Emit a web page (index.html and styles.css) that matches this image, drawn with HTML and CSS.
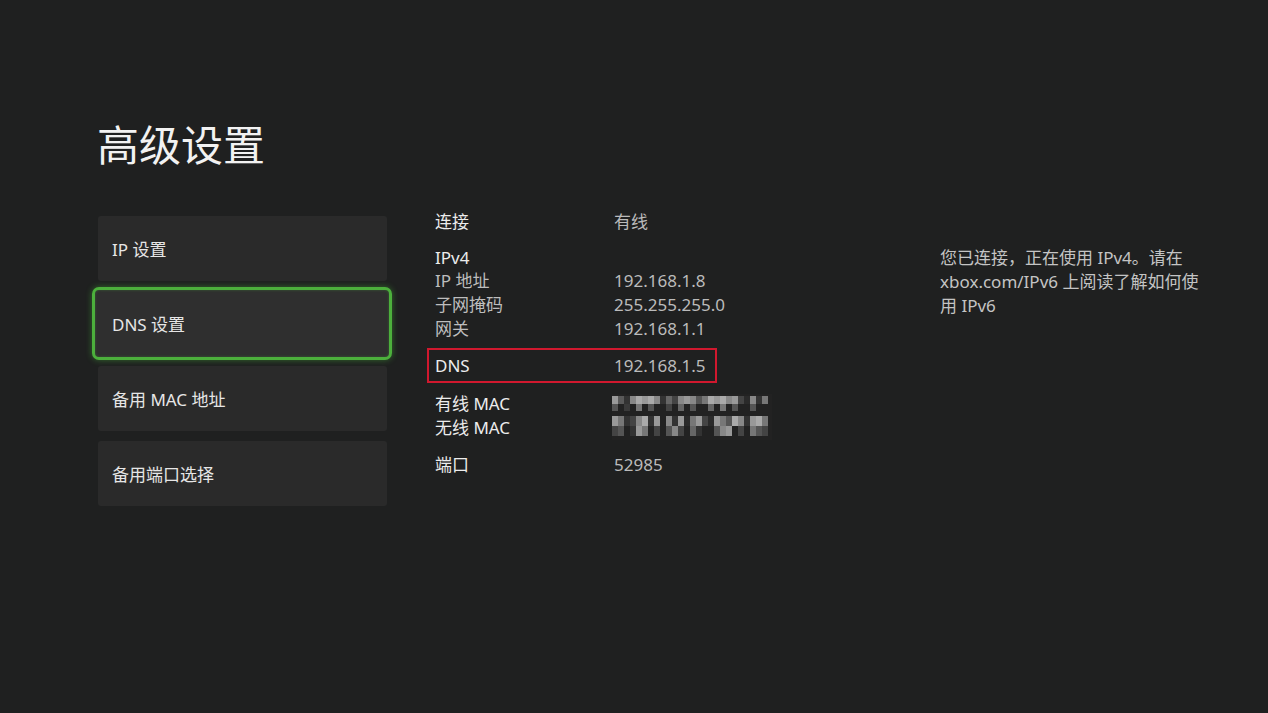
FILE: index.html
```html
<!DOCTYPE html>
<html lang="zh-CN">
<head>
<meta charset="utf-8">
<title>高级设置</title>
<link rel="stylesheet" href="styles.css">
</head>
<body>
<main class="page">
  <h1 class="title">高级设置</h1>
  <div class="content">
    <nav class="menu">
      <div class="card">IP 设置</div>
      <div class="card focused">DNS 设置</div>
      <div class="card">备用 MAC 地址</div>
      <div class="card">备用端口选择</div>
    </nav>
    <section class="details">
      <div class="group">
        <div class="row"><span class="label head">连接</span><span class="value">有线</span></div>
      </div>
      <div class="group">
        <div class="row"><span class="label head">IPv4</span></div>
        <div class="row"><span class="label">IP 地址</span><span class="value">192.168.1.8</span></div>
        <div class="row"><span class="label">子网掩码</span><span class="value">255.255.255.0</span></div>
        <div class="row"><span class="label">网关</span><span class="value">192.168.1.1</span></div>
      </div>
      <div class="group dns">
        <div class="row"><span class="label head">DNS</span><span class="value">192.168.1.5</span></div>
      </div>
      <div class="group mac">
        <div class="macrows">
          <div class="row"><span class="label head">有线 MAC</span></div>
          <div class="row"><span class="label head">无线 MAC</span></div>
        </div>
        <svg class="pixels" width="160" height="46" viewBox="0 0 160 46" aria-hidden="true">
          <g>
            <rect x="0" y="0" width="160" height="46" fill="#222"/>
            <rect x="0" y="2" width="6" height="8" fill="#9a9a9a"/>
            <rect x="6" y="2" width="6" height="8" fill="#5a5a5a"/>
            <rect x="12" y="2" width="6" height="8" fill="#333"/>
            <rect x="18" y="2" width="6" height="8" fill="#888"/>
            <rect x="24" y="2" width="6" height="8" fill="#aaa"/>
            <rect x="30" y="2" width="6" height="8" fill="#999"/>
            <rect x="36" y="2" width="6" height="8" fill="#aaa"/>
            <rect x="42" y="2" width="6" height="8" fill="#888"/>
            <rect x="48" y="2" width="6" height="8" fill="#333"/>
            <rect x="54" y="2" width="6" height="8" fill="#666"/>
            <rect x="60" y="2" width="6" height="8" fill="#444"/>
            <rect x="66" y="2" width="6" height="8" fill="#888"/>
            <rect x="72" y="2" width="6" height="8" fill="#999"/>
            <rect x="78" y="2" width="6" height="8" fill="#888"/>
            <rect x="84" y="2" width="6" height="8" fill="#555"/>
            <rect x="90" y="2" width="6" height="8" fill="#777"/>
            <rect x="96" y="2" width="6" height="8" fill="#aaa"/>
            <rect x="102" y="2" width="6" height="8" fill="#999"/>
            <rect x="108" y="2" width="6" height="8" fill="#aaa"/>
            <rect x="114" y="2" width="6" height="8" fill="#888"/>
            <rect x="120" y="2" width="6" height="8" fill="#999"/>
            <rect x="126" y="2" width="6" height="8" fill="#444"/>
            <rect x="132" y="2" width="6" height="8" fill="#2a2a2a"/>
            <rect x="138" y="2" width="6" height="8" fill="#888"/>
            <rect x="144" y="2" width="6" height="8" fill="#333"/>
            <rect x="150" y="2" width="6" height="8" fill="#777"/>
            <rect x="0" y="10" width="6" height="7" fill="#555"/>
            <rect x="12" y="10" width="6" height="7" fill="#3a3a3a"/>
            <rect x="24" y="10" width="6" height="7" fill="#777"/>
            <rect x="36" y="10" width="6" height="7" fill="#555"/>
            <rect x="54" y="10" width="6" height="7" fill="#444"/>
            <rect x="66" y="10" width="6" height="7" fill="#666"/>
            <rect x="78" y="10" width="6" height="7" fill="#555"/>
            <rect x="96" y="10" width="6" height="7" fill="#666"/>
            <rect x="108" y="10" width="6" height="7" fill="#777"/>
            <rect x="120" y="10" width="6" height="7" fill="#555"/>
            <rect x="138" y="10" width="6" height="7" fill="#555"/>
            <rect x="0" y="22" width="6" height="10" fill="#999"/>
            <rect x="6" y="22" width="6" height="10" fill="#777"/>
            <rect x="12" y="22" width="6" height="10" fill="#333"/>
            <rect x="18" y="22" width="6" height="10" fill="#444"/>
            <rect x="24" y="22" width="6" height="10" fill="#888"/>
            <rect x="30" y="22" width="6" height="10" fill="#aaa"/>
            <rect x="36" y="22" width="6" height="10" fill="#333"/>
            <rect x="42" y="22" width="6" height="10" fill="#999"/>
            <rect x="48" y="22" width="6" height="10" fill="#222"/>
            <rect x="54" y="22" width="6" height="10" fill="#888"/>
            <rect x="60" y="22" width="6" height="10" fill="#333"/>
            <rect x="66" y="22" width="6" height="10" fill="#999"/>
            <rect x="72" y="22" width="6" height="10" fill="#2a2a2a"/>
            <rect x="78" y="22" width="6" height="10" fill="#777"/>
            <rect x="84" y="22" width="6" height="10" fill="#999"/>
            <rect x="90" y="22" width="6" height="10" fill="#444"/>
            <rect x="96" y="22" width="6" height="10" fill="#2a2a2a"/>
            <rect x="102" y="22" width="6" height="10" fill="#999"/>
            <rect x="108" y="22" width="6" height="10" fill="#777"/>
            <rect x="114" y="22" width="6" height="10" fill="#555"/>
            <rect x="120" y="22" width="6" height="10" fill="#aaa"/>
            <rect x="126" y="22" width="6" height="10" fill="#888"/>
            <rect x="132" y="22" width="6" height="10" fill="#333"/>
            <rect x="138" y="22" width="6" height="10" fill="#999"/>
            <rect x="144" y="22" width="6" height="10" fill="#aaa"/>
            <rect x="150" y="22" width="6" height="10" fill="#777"/>
            <rect x="0" y="32" width="6" height="10" fill="#444"/>
            <rect x="6" y="32" width="6" height="10" fill="#555"/>
            <rect x="18" y="32" width="6" height="10" fill="#333"/>
            <rect x="24" y="32" width="6" height="10" fill="#999"/>
            <rect x="30" y="32" width="6" height="10" fill="#777"/>
            <rect x="42" y="32" width="6" height="10" fill="#444"/>
            <rect x="54" y="32" width="6" height="10" fill="#555"/>
            <rect x="60" y="32" width="6" height="10" fill="#888"/>
            <rect x="66" y="32" width="6" height="10" fill="#444"/>
            <rect x="78" y="32" width="6" height="10" fill="#666"/>
            <rect x="84" y="32" width="6" height="10" fill="#333"/>
            <rect x="102" y="32" width="6" height="10" fill="#555"/>
            <rect x="108" y="32" width="6" height="10" fill="#888"/>
            <rect x="114" y="32" width="6" height="10" fill="#999"/>
            <rect x="126" y="32" width="6" height="10" fill="#444"/>
            <rect x="138" y="32" width="6" height="10" fill="#777"/>
            <rect x="144" y="32" width="6" height="10" fill="#555"/>
            <rect x="150" y="32" width="6" height="10" fill="#444"/>
          </g>
        </svg>
      </div>
      <div class="group">
        <div class="row"><span class="label head">端口</span><span class="value">52985</span></div>
      </div>
    </section>
    <aside class="help">您已连接，正在使用 IPv4。请在<br>xbox.com/IPv6 上阅读了解如何使<br>用 IPv6</aside>
  </div>
</main>
</body>
</html>
```

FILE: styles.css
```css
html, body {
  margin: 0;
  padding: 0;
  height: 100%;
}

body {
  background: #1f2020;
  font-family: "Noto Sans", "Noto Sans CJK SC", sans-serif;
  color: #e8e8e8;
  overflow: hidden;
}

.page {
  padding: 118px 0 0 97px;
}

.title {
  margin: 0;
  font-size: 42px;
  line-height: 50px;
  font-weight: 400;
  color: #f2f2f2;
  font-family: "Noto Sans CJK SC", sans-serif;
}

.content {
  display: flex;
  align-items: flex-start;
  margin-top: 42px;
  padding-left: 1px;
}

.menu {
  width: 289px;
  display: flex;
  flex-direction: column;
  gap: 10px;
  margin-top: 6px;
}

.card {
  height: 65px;
  box-sizing: border-box;
  background: #2a2a2a;
  border-radius: 3px;
  padding-left: 14px;
  display: flex;
  align-items: center;
  font-size: 17px;
  color: #e6e6e6;
}

.card.focused {
  margin: -4px -5px -4px -6px;
  height: 73px;
  border: 3px solid #4cb03c;
  border-radius: 7px;
  padding-left: 17px;
  background: #2f2f2f;
  box-shadow: 0 0 6px rgba(76, 200, 60, 0.45), inset 0 0 3px rgba(76, 200, 60, 0.3);
}

.details {
  margin-left: 48px;
  width: 420px;
  font-size: 17px;
}

.group + .group {
  margin-top: 13px;
}

.row {
  display: flex;
  height: 24px;
  line-height: 24px;
}

.group:nth-child(2) .row:first-child {
  height: 22px;
  line-height: 22px;
}

.label {
  width: 179px;
  flex: none;
  color: #bdbdbd;
}

.label.head {
  color: #ececec;
}

.value {
  color: #bbbbbb;
}

.group.dns {
  margin-top: 7px;
  margin-left: -8px;
  width: 290px;
  box-sizing: border-box;
  padding: 4px 6px 3px 6px;
  border: 2px solid #d0182e;
}

.group.dns + .group {
  margin-top: 9px;
}

.group.mac {
  display: flex;
  height: 48px;
}

.macrows {
  width: 177px;
  flex: none;
}

.pixels {
  display: block;
  margin-top: 2px;
  filter: blur(0.4px);
}

.help {
  margin-left: 85px;
  margin-top: 36px;
  font-size: 17px;
  line-height: 24px;
  color: #c4c4c4;
}
```
